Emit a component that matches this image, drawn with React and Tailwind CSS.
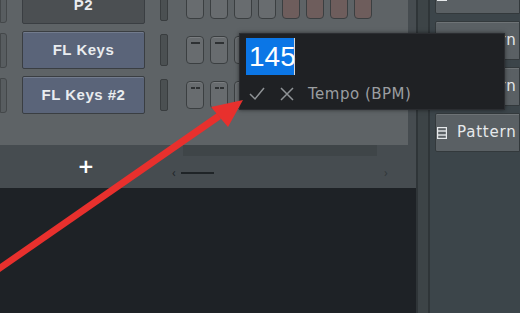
import React from 'react';

const topSteps = ['gray', 'gray', 'gray', 'gray', 'red', 'red', 'red', 'red'];

function Step({ tone = 'gray', mark = null, h = 'h-[27px]' }) {
  const bg = tone === 'red' ? 'bg-[#6e5d5c]' : 'bg-[#686c6f]';
  return (
    <div className={`w-[18px] ${h} ${bg} rounded-[4px] border border-[#3b3f41] flex justify-center pt-[5px] shadow-[inset_0_1px_0_rgba(255,255,255,0.12)]`}>
      {mark === 'dash' && <div className="w-[9px] h-[2px] bg-[#2e3133]" />}
      {mark === 'split' && (
        <div className="flex gap-[1px]">
          <div className="w-[4px] h-[2px] bg-[#2e3133]" />
          <div className="w-[4px] h-[2px] bg-[#2e3133]" />
        </div>
      )}
    </div>
  );
}

function ChannelRow({ name, selected, mark, top }) {
  return (
    <div className="flex items-center h-[38px]">
      <div className="w-[7px] h-[35px] bg-[#585d60] border border-[#44484a] rounded-r-[3px]" />
      <div
        className={`ml-[15px] w-[123px] h-[38px] rounded-[2px] border border-[#3a3e42] flex items-center justify-center font-bold text-[15px] tracking-[0.5px] text-[#e9ecef] ${
          selected ? 'bg-[#5a6479] shadow-[inset_0_1px_0_rgba(255,255,255,0.15)]' : 'bg-[#4b4f52]'
        }`}
        style={{ fontFamily: '"Liberation Sans", sans-serif' }}
      >
        {name}
      </div>
      <div className="ml-[15px] w-[8px] h-[32px] rounded-[2px] bg-[#4b5052] border border-[#393d3f]" />
      <div className="ml-[18px] flex gap-[6px] items-center">
        {top
          ? topSteps.map((t, i) => <Step key={i} tone={t} />)
          : [0, 1, 2, 3, 4, 5, 6, 7].map((i) => <Step key={i} mark={mark} h="h-[28px]" />)}
      </div>
    </div>
  );
}

function SideButton({ label }) {
  return (
    <div className="h-[39px] bg-[#5a6064] border border-[#33393c] rounded-l-[2px] flex items-center pl-[1px] gap-[10px] text-[#e6e9eb] text-[15px] tracking-[0.8px] shadow-[inset_0_1px_0_rgba(255,255,255,0.12)]">
      <svg width="10" height="12" viewBox="0 0 10 12" className="shrink-0">
        <rect x="0.5" y="0.5" width="9" height="11" fill="none" stroke="#e6e9eb" strokeWidth="1.4" />
        <line x1="0" y1="4" x2="9" y2="4" stroke="#e6e9eb" strokeWidth="1.4" />
        <line x1="0" y1="8" x2="9" y2="8" stroke="#e6e9eb" strokeWidth="1.4" />
      </svg>
      <span style={{ fontFamily: '"DejaVu Sans", sans-serif' }}>{label}</span>
    </div>
  );
}

export default function App() {
  return (
    <div className="relative w-[520px] h-[313px] overflow-hidden bg-[#1e2226] flex">
      {/* channel rack column */}
      <div className="w-[418px] flex flex-col border-r-2 border-[#2f3538]">
        <div className="h-[145px] bg-[#464c50] overflow-hidden">
          <div className="w-[408px] h-[145px] bg-[#5e6366] overflow-hidden">
            <div className="-mt-[14px] flex flex-col gap-[7px]">
              <ChannelRow name="P2" top />
              <ChannelRow name="FL Keys" selected mark="dash" />
              <ChannelRow name="FL Keys #2" selected mark="split" />
            </div>
          </div>
        </div>
        <div className="h-[43px] bg-[#464c50] flex">
          <div className="w-[172px] flex items-center justify-center text-white text-[20px] font-bold pb-[2px]" style={{ fontFamily: '"DejaVu Sans", sans-serif' }}>
            +
          </div>
          <div className="flex-1 flex flex-col">
            <div className="ml-[11px] w-[194px] h-[11px] bg-[#3f4548]" />
            <div className="flex items-center mt-[8px] text-[#22272a] text-[12px]">
              <span className="w-[9px]">‹</span>
              <div className="w-[33px] h-[2px] bg-[#1f2427]" />
              <span className="ml-[170px] text-[#32383b]">›</span>
            </div>
          </div>
        </div>
        <div className="flex-1 bg-[#1e2226]" />
      </div>

      {/* separator */}
      <div className="w-[10px] bg-[#3d4447]" />

      {/* right panel */}
      <div className="flex-1 bg-[#3c454a] border-l-[2px] border-[#2f3538] pl-[5px] overflow-hidden">
        <div className="-mt-[25px] flex flex-col gap-[7px]">
          <SideButton label="Mixer" />
          <SideButton label="Pattern" />
          <SideButton label="Pattern" />
          <SideButton label="Pattern" />
        </div>
      </div>

      {/* tempo entry popup */}
      <div className="absolute left-[239px] top-[33px] w-[266px] h-[77px] bg-[#1f2124] border border-[#2b2d31] shadow-[0_0_4px_rgba(0,0,0,0.5)]">
        <div className="ml-[6px] mt-[4px] flex items-center">
          <div
            className="h-[37px] w-[48px] bg-[#0b76e6] text-white text-[28px] leading-[37px] pl-[3px]"
            style={{ fontFamily: '"Liberation Sans", sans-serif' }}
          >
            145
          </div>
          <div className="w-[1px] h-[37px] bg-[#d8d8d8]" />
        </div>
        <div className="flex items-center mt-[8px] ml-[9px]">
          <svg width="16" height="14" viewBox="0 0 16 14">
            <path d="M1 7 L6 12 L15 1" fill="none" stroke="#8f9396" strokeWidth="1.5" />
          </svg>
          <svg width="14" height="14" viewBox="0 0 14 14" className="ml-[15px]">
            <path d="M1 1 L13 13 M13 1 L1 13" fill="none" stroke="#8f9396" strokeWidth="1.5" />
          </svg>
          <span className="ml-[14px] text-[15px] text-[#9b9ea1] tracking-[0.5px]" style={{ fontFamily: '"DejaVu Sans", sans-serif' }}>
            Tempo (BPM)
          </span>
        </div>
      </div>

      {/* red annotation arrow */}
      <svg className="absolute left-0 top-0" width="520" height="313" viewBox="0 0 520 313">
        <polygon points="0,264 217,113 221,119 0,272" fill="#e8302d" />
        <polygon points="243,100 211,107 228,127" fill="#e8302d" />
      </svg>
    </div>
  );
}
